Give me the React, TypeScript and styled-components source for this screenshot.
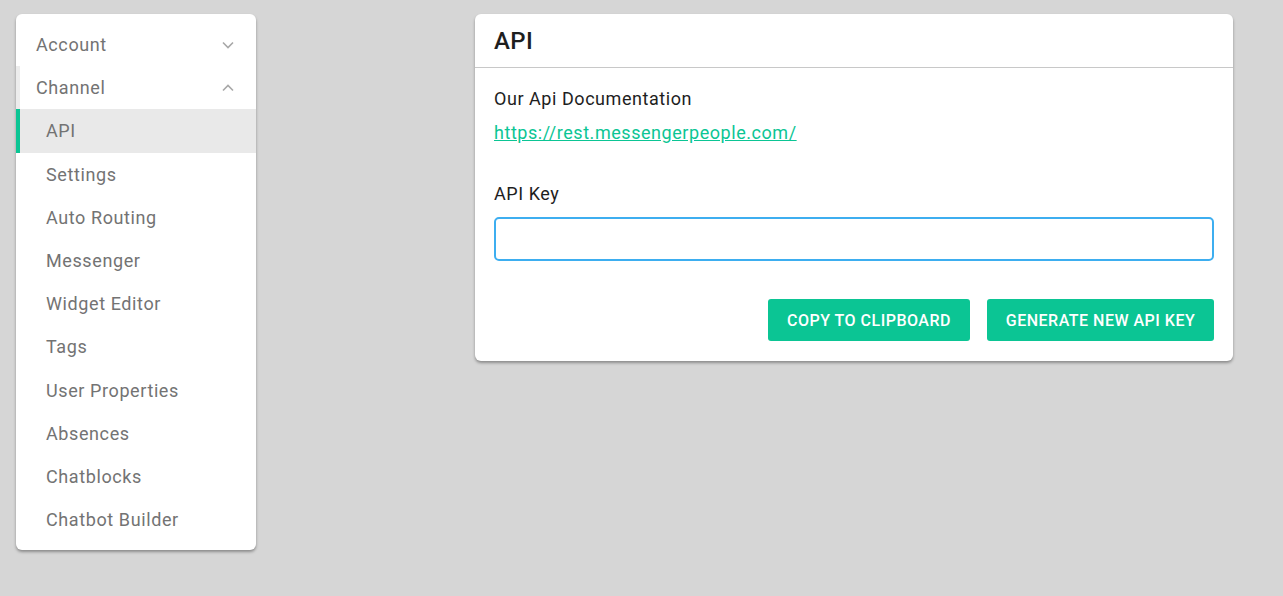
import React from 'react';
import styled, { createGlobalStyle } from 'styled-components';

const GlobalStyle = createGlobalStyle`
  html, body {
    margin: 0;
    padding: 0;
    background: #d6d6d6;
    font-family: Roboto, "Liberation Sans", sans-serif;
  }
`;

const Page = styled.div`
  display: flex;
  align-items: flex-start;
  padding: 14px 0 0 16px;
  min-height: 596px;
  box-sizing: border-box;
`;

const Sidebar = styled.nav`
  width: 240px;
  background: #fff;
  border-radius: 6px;
  box-shadow: 0 2px 3px rgba(0, 0, 0, 0.35);
  padding: 9px 0;
  box-sizing: border-box;
`;

const NavRow = styled.div<{ $level: number; $active?: boolean; $open?: boolean }>`
  display: flex;
  align-items: center;
  justify-content: space-between;
  height: 43.2px;
  box-sizing: border-box;
  padding-left: ${(p) => (p.$level === 0 ? 16 : 26)}px;
  padding-right: 22px;
  border-left: 4px solid
    ${(p) => (p.$active ? '#0bc594' : p.$open ? '#ececec' : 'transparent')};
  background: ${(p) => (p.$active ? '#e9e9e9' : 'transparent')};
  font-size: 18px;
  color: #737373;
  letter-spacing: 0.6px;
`;

const Chevron = styled.svg`
  width: 12px;
  height: 8px;
  fill: none;
  stroke: #a8a8a8;
  stroke-width: 1.6;
`;

const Main = styled.section`
  width: 758px;
  margin-left: 219px;
  background: #fff;
  border-radius: 6px;
  box-shadow: 0 2px 3px rgba(0, 0, 0, 0.35);
`;

const CardHeader = styled.header`
  height: 53px;
  display: flex;
  align-items: center;
  padding: 0 19px;
  border-bottom: 1px solid #c8c8c8;
  font-size: 24px;
  font-weight: 500;
  letter-spacing: 0.4px;
  color: #1e1e1e;
`;

const CardBody = styled.div`
  padding: 19px 19px 20px;
  display: flex;
  flex-direction: column;
`;

const Label = styled.div`
  font-size: 18px;
  color: #1e1e1e;
  line-height: 24px;
  letter-spacing: 0.55px;
`;

const DocLink = styled.a`
  margin-top: 10px;
  font-size: 18px;
  line-height: 24px;
  letter-spacing: 0.55px;
  color: #0bc594;
  text-decoration: underline;
  align-self: flex-start;
`;

const KeyLabel = styled(Label)`
  margin-top: 37px;
`;

const KeyInput = styled.input`
  margin-top: 11px;
  height: 44px;
  box-sizing: border-box;
  border: 2px solid #3daef0;
  border-radius: 5px;
  padding: 0 10px;
  font-family: inherit;
  font-size: 16px;
  color: #fff;
  outline: none;
`;

const Actions = styled.div`
  display: flex;
  justify-content: flex-end;
  gap: 17px;
  margin-top: 38px;
`;

const ActionButton = styled.button<{ $width: number }>`
  width: ${(p) => p.$width}px;
  height: 42px;
  border: none;
  border-radius: 3px;
  background: #0bc594;
  color: #fff;
  font-family: inherit;
  font-size: 16px;
  font-weight: 500;
  text-transform: uppercase;
  letter-spacing: 0.5px;
  cursor: pointer;
`;

const Down = () => (
  <Chevron viewBox="0 0 12 8">
    <polyline points="1,1.5 6,6.5 11,1.5" />
  </Chevron>
);

const Up = () => (
  <Chevron viewBox="0 0 12 8">
    <polyline points="1,6.5 6,1.5 11,6.5" />
  </Chevron>
);

const channelItems = [
  'API',
  'Settings',
  'Auto Routing',
  'Messenger',
  'Widget Editor',
  'Tags',
  'User Properties',
  'Absences',
  'Chatblocks',
  'Chatbot Builder',
];

export default function App() {
  return (
    <>
      <GlobalStyle />
      <Page>
        <Sidebar>
          <NavRow $level={0}>
            <span>Account</span>
            <Down />
          </NavRow>
          <NavRow $level={0} $open>
            <span>Channel</span>
            <Up />
          </NavRow>
          {channelItems.map((item) => (
            <NavRow key={item} $level={1} $active={item === 'API'}>
              {item}
            </NavRow>
          ))}
        </Sidebar>

        <Main>
          <CardHeader>API</CardHeader>
          <CardBody>
            <Label>Our Api Documentation</Label>
            <DocLink href="#">https://rest.messengerpeople.com/</DocLink>
            <KeyLabel>API Key</KeyLabel>
            <KeyInput readOnly value="" />
            <Actions>
              <ActionButton $width={202}>Copy to clipboard</ActionButton>
              <ActionButton $width={227}>Generate new API key</ActionButton>
            </Actions>
          </CardBody>
        </Main>
      </Page>
    </>
  );
}
